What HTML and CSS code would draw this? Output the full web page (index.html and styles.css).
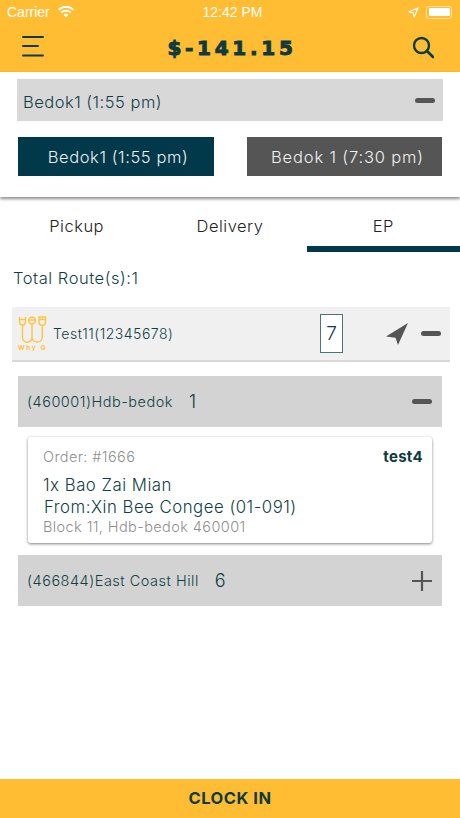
FILE: index.html
```html
<!DOCTYPE html>
<html lang="en">
<head>
<meta charset="utf-8">
<title>Route</title>
<link rel="stylesheet" href="styles.css">
</head>
<body>
<div class="app">
  <header class="top">
    <div class="status">
      <div class="status-left">
        <span>Carrier</span>
        <svg class="wifi" viewBox="0 0 16 12" width="16" height="12"><path d="M8 11.500 5.600 8.800a3.400 3.400 0 0 1 4.800 0zM3.900 7.200l-1.300-1.400a7.800 7.800 0 0 1 10.800 0l-1.300 1.400a5.900 5.900 0 0 0-8.200 0zM1.300 4.400 0 3a11.600 11.600 0 0 1 16 0l-1.300 1.400a9.700 9.700 0 0 0-13.400 0z" fill="#fff"/></svg>
      </div>
      <span class="clock">12:42 PM</span>
      <div class="status-right">
        <svg viewBox="0 0 12 12" width="11" height="11"><path d="M11 1 1 5.300l4.600 1.100L6.700 11z" fill="none" stroke="#fff" stroke-width="1.200" stroke-linejoin="round"/></svg>
        <span class="battery"><span class="battery-fill"></span></span>
      </div>
    </div>
    <div class="bar">
      <svg viewBox="0 0 22 22" width="22" height="22"><path d="M1 2h20M1 11h15M1 20.500h20" stroke="#0f3b40" stroke-width="2" stroke-linecap="round" fill="none"/></svg>
      <div class="amount">$-141.15</div>
      <svg viewBox="0 0 22 22" width="22" height="24"><circle cx="9.500" cy="9.500" r="7.500" fill="none" stroke="#0f3b40" stroke-width="2.400"/><path d="m15 15 6 6" stroke="#0f3b40" stroke-width="2.800" stroke-linecap="round"/></svg>
    </div>
  </header>

  <section class="shift-panel">
    <div class="shift-head">
      <span class="shift-title">Bedok1 (1:55 pm)</span>
      <span class="minus"></span>
    </div>
    <div class="shift-buttons">
      <button class="shift-btn active">Bedok1 (1:55 pm)</button>
      <button class="shift-btn wide">Bedok 1 (7:30 pm)</button>
    </div>
  </section>

  <nav class="tabs">
    <div class="tab">Pickup</div>
    <div class="tab">Delivery</div>
    <div class="tab selected">EP</div>
  </nav>

  <main class="content">
    <div class="total">Total Route(s):1</div>

    <div class="route">
      <div class="route-name">
        <div class="logo">
          <svg viewBox="0 0 31 28" width="31" height="28">
            <g fill="none" stroke="#fdc443" stroke-width="1.400">
              <path d="M2.500 1v5a3 3 0 0 0 6 0V1M2.500 3.500h6"/>
              <circle cx="15" cy="4.500" r="3.300"/><path d="M11.700 4h6.600"/>
              <path d="M22 1h6.500v5a3.250 3.250 0 0 1-6.500 0zM22 3.500h6.500"/>
              <path d="M5.500 9.500v12a4.700 4.700 0 0 0 9.500 0V8"/>
              <path d="M15 21.500a5.200 5.200 0 0 0 10.300 0V9.500"/>
            </g>
          </svg>
          <span class="logo-text">Why Q</span>
        </div>
        <span>Test11(12345678)</span>
      </div>
      <div class="route-count">7</div>
      <svg class="nav-arrow" viewBox="0 0 22 22" width="22" height="22"><path d="M22 0 0 13.500l9.500 1.200L12 22z" fill="#555"/></svg>
      <span class="minus"></span>
    </div>

    <div class="stop">
      <span class="stop-name">(460001)Hdb-bedok</span>
      <span class="stop-count">1</span>
      <span class="minus"></span>
    </div>

    <article class="card">
      <div class="card-top">
        <span class="muted">Order: #1666</span>
        <span class="tag">test4</span>
      </div>
      <div class="item">1x Bao Zai Mian</div>
      <div class="item from">From:Xin Bee Congee (01-091)</div>
      <div class="muted addr">Block 11, Hdb-bedok 460001</div>
    </article>

    <div class="stop">
      <span class="stop-name">(466844)East Coast Hill</span>
      <span class="stop-count">6</span>
      <svg class="plus" viewBox="0 0 20 20" width="20" height="20"><path d="M10 0v20M0 10h20" stroke="#555" stroke-width="2.200"/></svg>
    </div>
  </main>

  <footer class="clock-in">CLOCK IN</footer>
</div>
</body>
</html>
```
FILE: styles.css
```css
* { box-sizing: border-box; }
html, body { margin: 0; height: 100%; }
body { font-family: Inter, "Open Sans", sans-serif; font-weight: 350; color: #123f45; background: #fff; }
.app { width: 460px; height: 818px; display: flex; flex-direction: column; overflow: hidden; }

.top { height: 72px; background: #febd33; }
.status { height: 24px; padding: 0 8px 0 7px; display: flex; align-items: center; justify-content: space-between; color: #fff; font-family: "Liberation Sans", sans-serif; font-weight: 400; font-size: 14px; }
.status-left { display: flex; align-items: center; gap: 8px; width: 123px; }
.clock { font-size: 14px; }
.status-right { display: flex; align-items: center; justify-content: flex-end; gap: 7px; width: 117px; }
.battery { width: 26px; height: 13px; border: 1px solid #ffe2a3; border-radius: 3px; padding: 1.500px; display: block; }
.battery-fill { display: block; height: 100%; background: #fff; border-radius: 1px; }
.bar { height: 48px; padding: 11px 26px 0 22px; display: flex; justify-content: space-between; align-items: flex-start; }
.amount { font-family: "DejaVu Sans", sans-serif; font-weight: 700; font-size: 20px; letter-spacing: 3.700px; color: #0f3b40; line-height: 24px; margin: 1px 0 0 8px; -webkit-text-stroke: 1px #0f3b40; }

.shift-panel { height: 125px; padding: 7px 17px 0; box-shadow: 0 2px 3px rgba(0,0,0,.45); position: relative; background: #fff; }
.shift-head { height: 42px; background: #d8d8d8; display: flex; align-items: center; justify-content: space-between; padding: 0 8px 0 6px; font-size: 16.500px; letter-spacing: .5px; color: #123f45; }
.shift-title { padding-top: 4px; }
.minus { width: 20px; height: 5px; border-radius: 3px; background: #555; flex: none; }
.shift-buttons { margin-top: 16px; padding: 0 1px; display: flex; justify-content: space-between; }
.shift-btn { width: 195px; height: 39px; border: 0; padding: 0 0 0 4px; background: #555; color: #f0f0f0; font: 350 16.500px Inter, sans-serif; letter-spacing: .6px; }
.shift-btn.wide { padding-left: 6px; letter-spacing: .85px; }
.shift-btn.active { width: 196px; background: #01394a; }

.tabs { height: 55px; display: flex; }
.tab { flex: 1; text-align: center; padding-top: 19px; font-size: 16.500px; letter-spacing: .5px; line-height: 20px; color: #222; }
.tab.selected { border-bottom: 6px solid #01394a; }

.content { flex: 1; padding: 0 12px; }
.total { margin-top: 16px; height: 20px; line-height: 20px; font-size: 16.500px; letter-spacing: .55px; color: #123f45; padding-left: 1px; }
.route { margin-top: 19px; width: 438px; height: 55px; background: #f0f0f0; border-bottom: 2px solid #d8d8d8; display: flex; align-items: center; padding: 0 9px 0 5px; }
.route-name { display: flex; align-items: center; gap: 5px; font-size: 14px; letter-spacing: .5px; color: #123f45; width: 303px; }
.logo { display: flex; flex-direction: column; align-items: center; width: 31px; flex: none; }
.logo-text { font-size: 6.500px; font-weight: 700; letter-spacing: 1.600px; color: #fdc443; line-height: 8px; white-space: nowrap; }
.route-count { width: 23px; height: 39px; border: 1px solid #4f7478; background: #fff; display: flex; align-items: center; justify-content: center; font-size: 19px; color: #123f45; }
.nav-arrow { margin-left: 43px; }
.route .minus { margin-left: 13px; }

.stop { margin: 14px 6px 0; height: 51px; background: #d3d3d3; display: flex; align-items: center; padding: 0 10px 0 9px; font-size: 14.500px; letter-spacing: .5px; color: #123f45; }
.stop-count { font-size: 18px; margin-left: 16px; color: #0f3b40; flex: 1; }
.card { margin: 10px 16px 0; height: 106px; background: #fff; border-radius: 3px; box-shadow: 0 1px 3px rgba(0,0,0,.5); padding: 10px 9px 0 15px; }
.card + .stop { margin-top: 12px; }
.card-top { display: flex; justify-content: space-between; align-items: center; height: 18px; }
.muted { color: #8f8f8f; font-size: 14.500px; letter-spacing: .4px; }
.tag { font-weight: 700; font-size: 15px; letter-spacing: .3px; color: #0f3b40; }
.item { font-size: 16.800px; letter-spacing: .5px; line-height: 22px; color: #123f45; margin-top: 9px; }
.item.from { margin-top: 0; padding-left: 1px; }
.addr { display: block; margin-top: 0; line-height: 18px; }

.clock-in { height: 39px; padding-bottom: 2px; background: #febd33; color: #0f3b40; font-weight: 700; font-size: 16.500px; display: flex; align-items: center; justify-content: center; letter-spacing: .5px; }
```
